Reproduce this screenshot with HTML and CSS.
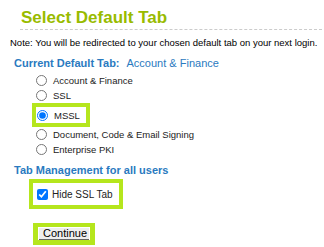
FILE: index.html
```html
<!DOCTYPE html>
<html lang="en">

<head>
    <meta charset="UTF-8">
    <title>Select Default Tab</title>
    <link rel="stylesheet" href="styles.css">
</head>

<body>
    <div class="page">
        <h2 class="title">Select Default Tab</h2>
        <p class="note">Note: You will be redirected to your chosen default tab on your next login.</p>

        <h3 class="section">Current Default Tab:<span class="current">Account &amp; Finance</span></h3>

        <div class="options">
            <label class="option"><input type="radio" name="tab"> Account &amp; Finance</label>
            <label class="option"><input type="radio" name="tab"> SSL</label>
            <div class="mark mssl-box">
                <label class="option"><input type="radio" name="tab" checked> MSSL</label>
            </div>
            <label class="option"><input type="radio" name="tab"> Document, Code &amp; Email Signing</label>
            <label class="option"><input type="radio" name="tab"> Enterprise PKI</label>
        </div>

        <h3 class="section manage">Tab Management for all users</h3>

        <div class="mark hide-box">
            <label class="option"><input type="checkbox" checked> Hide SSL Tab</label>
        </div>

        <div class="mark continue-box">
            <button class="continue">Continue</button>
        </div>
    </div>
</body>

</html>
```

FILE: styles.css
```css
* {
    box-sizing: border-box;
}

body {
    margin: 0;
    font-family: "Liberation Sans", Arial, sans-serif;
    font-size: 9.5px;
    color: #000000;
    background: #ffffff;
}

.page {
    width: 324px;
    padding-top: 8px;
}

.title {
    margin: 0 2px 0 20px;
    padding: 0 0 1px 1px;
    font-size: 17px;
    line-height: 20px;
    color: #99bb00;
    border-bottom: 1px dashed #cccccc;
}

.note {
    margin: 6px 0 0 10px;
    line-height: 13px;
    white-space: nowrap;
}

.section {
    margin: 7px 0 0 14px;
    font-size: 11px;
    line-height: 14px;
    color: #2a7ac0;
}

.current {
    font-weight: normal;
    margin-left: 7px;
}

.options {
    margin-top: 2px;
    display: flex;
    flex-direction: column;
    align-items: flex-start;
}

.option {
    display: flex;
    align-items: center;
    height: 15px;
    padding-left: 36px;
    color: #222222;
    white-space: nowrap;
}

.option:first-child {
    height: 16px;
}

.option input {
    margin: 0 6px 0 0;
    width: 11px;
    height: 11px;
}

.mark {
    display: inline-block;
    border: 4px solid #b5e61d;
    background: #ffffff;
}

.mssl-box {
    margin-left: 32px;
    width: 58px;
    height: 24px;
}

.mssl-box .option {
    height: 16px;
    padding-left: 1px;
}

.manage {
    margin-top: 6px;
}

.hide-box {
    margin: 2px 0 0 29px;
    height: 30px;
    padding: 3px 6px 0 4px;
}

.hide-box .option {
    height: 16px;
    padding-left: 0;
    font-size: 10px;
}

.hide-box input {
    margin-right: 4px;
}

.continue-box {
    display: block;
    width: 62px;
    height: 22px;
    margin: 14px 0 0 33px;
    border-width: 4px 5px 5px 5px;
    padding: 1px 0 0 1px;
}

.continue {
    display: block;
    width: 50px;
    height: 12px;
    font-family: "Liberation Sans", Arial, sans-serif;
    font-size: 11px;
    line-height: 11px;
    padding: 0 0 0 4px;
    text-align: left;
    border: none;
    border-bottom: 1px solid #666666;
    background: #eeeeee;
    color: #000000;
}
```
